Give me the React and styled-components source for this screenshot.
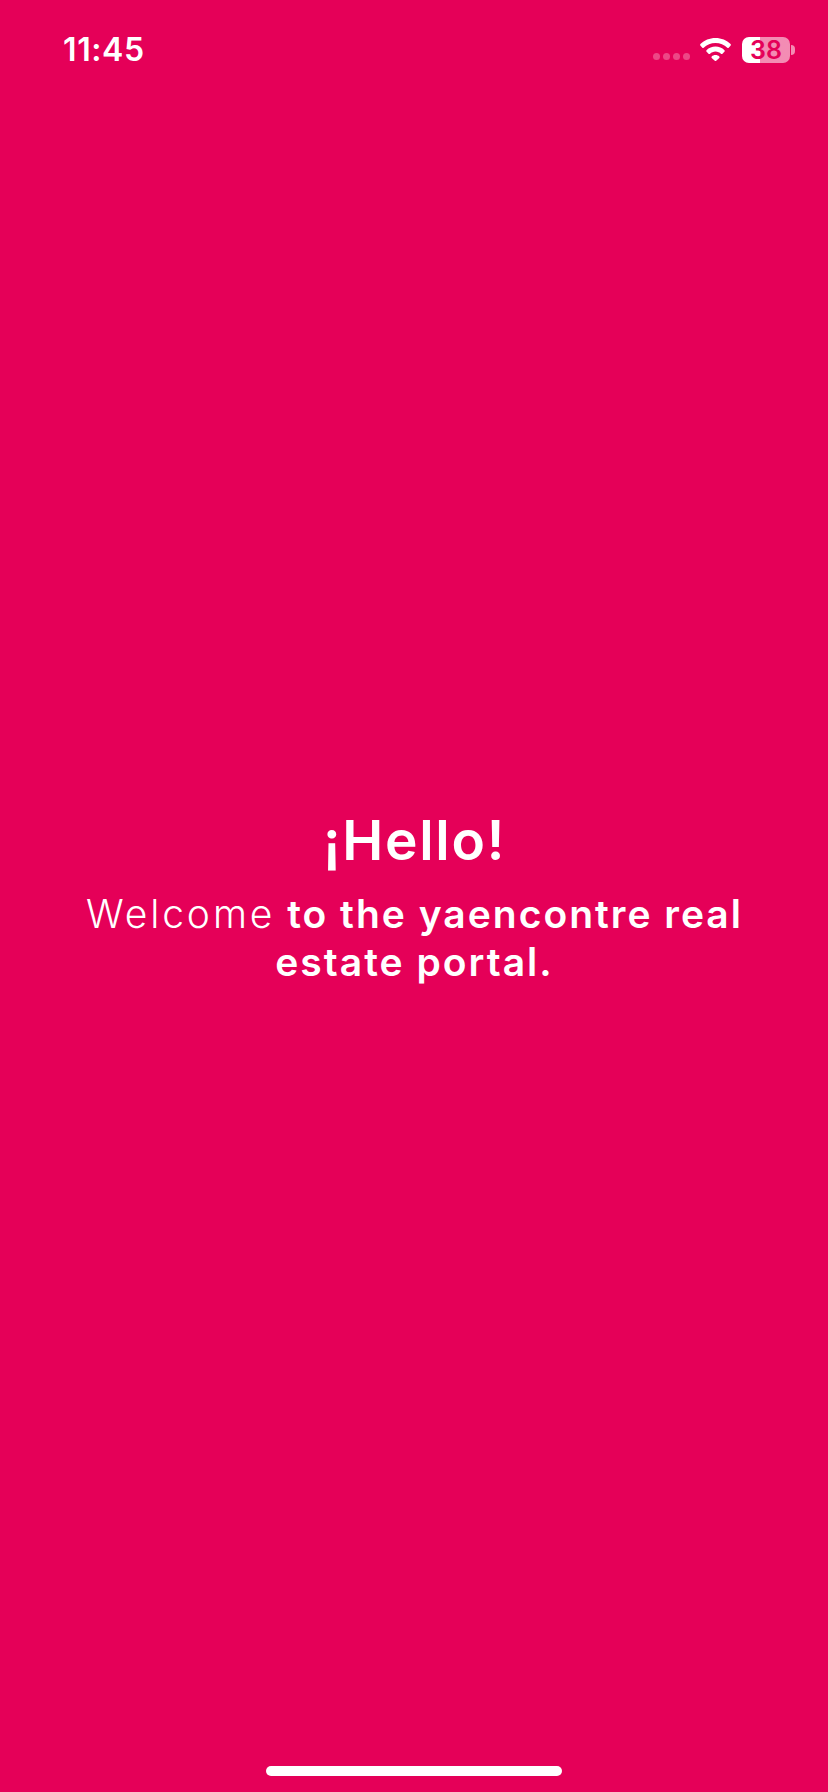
import React from 'react';
import styled, { createGlobalStyle } from 'styled-components';

const GlobalStyle = createGlobalStyle`
  html, body {
    margin: 0;
    padding: 0;
    background: #e50058;
  }
`;

const Screen = styled.div`
  width: 828px;
  height: 1792px;
  display: flex;
  flex-direction: column;
  background: #e50058;
  color: #fff;
  font-family: Inter, "Liberation Sans", sans-serif;
  overflow: hidden;
`;

const StatusBar = styled.div`
  height: 98px;
  flex-shrink: 0;
  box-sizing: border-box;
  padding: 36px 38px 0 63px;
  display: flex;
  justify-content: space-between;
  align-items: flex-start;
`;

const Time = styled.div`
  font-size: 32px;
  line-height: 27px;
  font-weight: 600;
  letter-spacing: 0.6px;
`;

const Indicators = styled.div`
  display: flex;
  align-items: center;
  height: 27px;
`;

const Dots = styled.div`
  display: flex;
  gap: 3px;
  margin-right: 10px;
  padding-top: 14px;
`;

const Dot = styled.span`
  width: 7px;
  height: 7px;
  border-radius: 50%;
  background: rgba(255, 255, 255, 0.28);
`;

const Battery = styled.div`
  position: relative;
  width: 48px;
  height: 26px;
  margin-left: 11px;
  border-radius: 7px;
  background: linear-gradient(90deg, #fff 38%, rgba(255, 255, 255, 0.55) 38%);
  color: #e50058;
  font-size: 25px;
  font-weight: 600;
  line-height: 26px;
  text-align: center;

  &::after {
    content: "";
    position: absolute;
    left: 49px;
    top: 8px;
    width: 4px;
    height: 10px;
    border-radius: 0 6px 6px 0;
    background: rgba(255, 255, 255, 0.55);
  }
`;

const Main = styled.main`
  flex: 1;
  display: flex;
  flex-direction: column;
  align-items: center;
  padding-top: 709px;
  padding-left: 1px;
`;

const Title = styled.h1`
  margin: 0;
  font-size: 55px;
  line-height: 66px;
  font-weight: 600;
  letter-spacing: 1.7px;
`;

const Welcome = styled.p`
  margin: 17px 0 0;
  width: 690px;
  font-size: 39px;
  line-height: 48px;
  font-weight: 600;
  letter-spacing: 2px;
  text-align: center;

  span {
    font-weight: 300;
    letter-spacing: 2.9px;
  }
`;

const HomeBar = styled.div`
  width: 296px;
  height: 10px;
  flex-shrink: 0;
  margin: 0 auto 16px;
  border-radius: 5px;
  background: #fff;
`;

const WifiIcon = () => (
  <svg width="31" height="23" viewBox="0 0 31 23" fill="#fff">
    <path d="M15.5 0C9.6 0 4.3 2.3.4 6.1c-.4.4-.4 1-.1 1.4l2 2.2c.4.4 1 .4 1.4 0C6.8 6.7 10.9 4.9 15.5 4.9s8.7 1.8 11.8 4.8c.4.4 1 .4 1.4 0l2-2.2c.3-.4.3-1-.1-1.4C26.7 2.3 21.4 0 15.5 0z" />
    <path d="M15.5 8.6c-3.4 0-6.6 1.3-9 3.6-.4.4-.4 1-.1 1.4l2.1 2.2c.4.4 1 .4 1.4.1 1.5-1.4 3.5-2.3 5.6-2.3s4.1.9 5.6 2.3c.4.3 1 .3 1.4-.1l2.1-2.2c.3-.4.3-1-.1-1.4-2.4-2.3-5.6-3.6-9-3.6z" />
    <path d="M15.5 17c-1.5 0-2.8.5-3.8 1.5-.4.4-.4 1 0 1.4l3.1 2.8c.4.3 1 .3 1.4 0l3.1-2.8c.4-.4.4-1 0-1.4-1-1-2.3-1.5-3.8-1.5z" />
  </svg>
);

const App = () => (
  <Screen>
    <GlobalStyle />
    <StatusBar>
      <Time>11:45</Time>
      <Indicators>
        <Dots>
          <Dot />
          <Dot />
          <Dot />
          <Dot />
        </Dots>
        <WifiIcon />
        <Battery>38</Battery>
      </Indicators>
    </StatusBar>
    <Main>
      <Title>¡Hello!</Title>
      <Welcome>
        <span>Welcome</span> to the yaencontre real estate portal.
      </Welcome>
    </Main>
    <HomeBar />
  </Screen>
);

export default App;
